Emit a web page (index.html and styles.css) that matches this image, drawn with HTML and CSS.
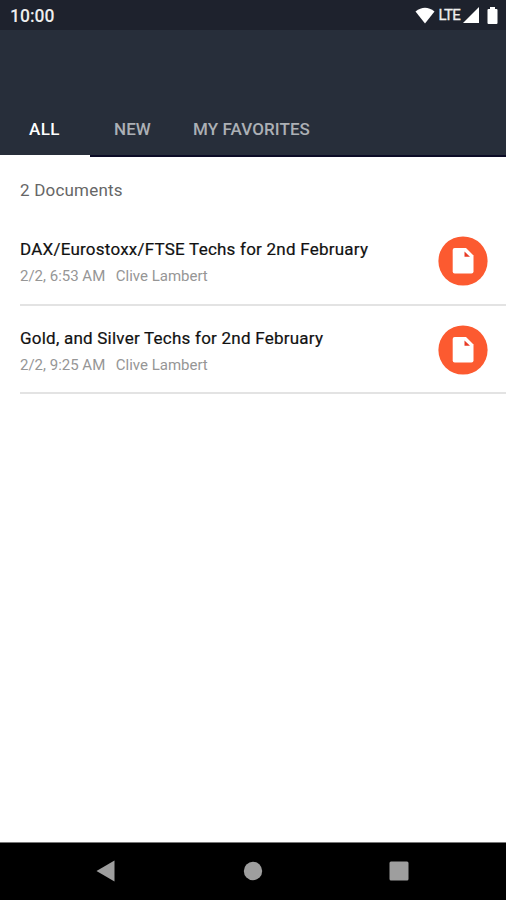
FILE: index.html
```
<!DOCTYPE html>
<html lang="en">
<head>
    <meta charset="UTF-8">
    <title>Documents</title>
    <link rel="stylesheet" href="styles.css">
</head>
<body>
<div class="phone">
    <div class="status">
        <span class="time">10:00</span>
        <svg class="wifi" width="20" height="17" viewBox="0 0 20 17"><path d="M0.5 4.5Q10 -3 19.5 4.5L10 16.5Z" fill="#fff"/></svg>
        <span class="lte">LTE</span>
        <svg class="signal" width="16" height="16" viewBox="0 0 16 16"><path d="M16 0V16H0Z" fill="#fff"/></svg>
        <svg class="battery" width="11" height="17" viewBox="0 0 11 17"><path d="M3 0H8V2H9.5Q10.5 2 10.5 3V16Q10.5 17 9.5 17H1.5Q0.5 17 0.5 16V3Q0.5 2 1.5 2H3Z" fill="#fff"/></svg>
    </div>
    <div class="header">
        <div class="tabs">
            <a class="tab all active">ALL</a>
            <a class="tab new">NEW</a>
            <a class="tab fav">MY FAVORITES</a>
        </div>
    </div>
    <div class="content">
        <div class="count">2 Documents</div>
        <ul class="list">
            <li>
                <div class="info">
                    <div class="title">DAX/Eurostoxx/FTSE Techs for 2nd February</div>
                    <div class="sub"><span class="date">2/2, 6:53 AM</span><span class="name">Clive Lambert</span></div>
                </div>
                <svg class="doc" width="50" height="50" viewBox="0 0 50 50">
                    <circle cx="25" cy="25" r="24.6" fill="#fc5a30"/>
                    <path d="M16.7 12H28L35.5 19.5V35.6Q35.5 37.6 33.5 37.6H16.7Q14.7 37.6 14.7 35.6V14Q14.7 12 16.7 12Z" fill="#fff"/>
                    <path d="M26.5 15.5V20.8H32Z" fill="#e83a24"/>
                </svg>
            </li>
            <li>
                <div class="info">
                    <div class="title">Gold, and Silver Techs for 2nd February</div>
                    <div class="sub"><span class="date">2/2, 9:25 AM</span><span class="name">Clive Lambert</span></div>
                </div>
                <svg class="doc" width="50" height="50" viewBox="0 0 50 50">
                    <circle cx="25" cy="25" r="24.6" fill="#fc5a30"/>
                    <path d="M16.7 12H28L35.5 19.5V35.6Q35.5 37.6 33.5 37.6H16.7Q14.7 37.6 14.7 35.6V14Q14.7 12 16.7 12Z" fill="#fff"/>
                    <path d="M26.5 15.5V20.8H32Z" fill="#e83a24"/>
                </svg>
            </li>
        </ul>
    </div>
    <div class="navbar">
        <svg width="20" height="22" viewBox="0 0 20 22"><path d="M0.5 11L18.5 0.5V21.5Z" fill="#9e9e9e"/></svg>
        <svg width="20" height="20" viewBox="0 0 20 20"><circle cx="10" cy="10" r="9.2" fill="#9e9e9e"/></svg>
        <svg width="20" height="20" viewBox="0 0 20 20"><rect x="0.5" y="0.5" width="19" height="19" rx="1.5" fill="#9e9e9e"/></svg>
    </div>
</div>
</body>
</html>
```
FILE: styles.css
```
html, body {
    margin: 0;
    padding: 0;
}
body {
    font-family: Roboto, "Liberation Sans", sans-serif;
    background-color: #fff;
}
.phone {
    width: 506px;
    height: 900px;
    display: flex;
    flex-direction: column;
    overflow: hidden;
}
.status {
    height: 30px;
    padding: 0 8px 0 10px;
    background-color: #1e222d;
    color: #eee;
    display: flex;
    align-items: center;
    flex: none;
    box-sizing: border-box;
}
.time {
    font-size: 17.5px;
    line-height: 20px;
    font-weight: 500;
    margin-top: 2px;
    margin-right: auto;
}
.lte {
    font-size: 15px;
    margin-left: 4px;
    letter-spacing: -0.7px;
    -webkit-text-stroke: 0.3px #eee;
}
.signal {
    margin-left: 3px;
}
.battery {
    margin-left: 8px;
}
.header {
    height: 127px;
    flex: none;
    box-sizing: border-box;
    background-color: #272e3a;
    border-bottom: 2px solid #0c0c26;
    display: flex;
    align-items: flex-end;
}
.tabs {
    display: flex;
    height: 56px;
    margin-bottom: -2px;
}
.tab {
    box-sizing: border-box;
    height: 56px;
    color: #acb0b5;
    font-size: 17px;
    font-weight: 500;
    line-height: 56px;
    letter-spacing: 0.1px;
    white-space: nowrap;
}
.all {
    width: 90px;
    padding-left: 29px;
    letter-spacing: 0.4px;
}
.new {
    width: 87px;
    padding-left: 24px;
}
.fav {
    padding-left: 16px;
}
.active {
    color: #fff;
    border-bottom: 2px solid #fff;
}
.content {
    flex: 1;
}
.count {
    height: 60px;
    padding: 23px 0 0 20px;
    box-sizing: border-box;
    font-size: 17px;
    line-height: 20px;
    letter-spacing: 0.2px;
    color: #666;
}
.list {
    margin: 0;
    padding: 0 0 0 20px;
}
.list li {
    list-style: none;
    height: 88.5px;
    box-sizing: border-box;
    border-bottom: 2px solid #e3e3e3;
    display: flex;
    justify-content: space-between;
    padding-right: 18.5px;
}
.info {
    padding-top: 22px;
}
.title {
    font-size: 17px;
    line-height: 20px;
    letter-spacing: 0.23px;
    color: #111;
    -webkit-text-stroke: 0.2px #111;
    white-space: nowrap;
}
.sub {
    margin-top: 7px;
    font-size: 15px;
    line-height: 20px;
    color: #969696;
}
.name {
    margin-left: 10.5px;
}
.doc {
    margin-top: 19px;
}
.navbar {
    height: 58px;
    flex: none;
    box-sizing: border-box;
    border-top: 1px solid #777;
    background-color: #000;
    display: flex;
    align-items: center;
    justify-content: space-between;
    padding: 0 97px 2px 96px;
}
```
